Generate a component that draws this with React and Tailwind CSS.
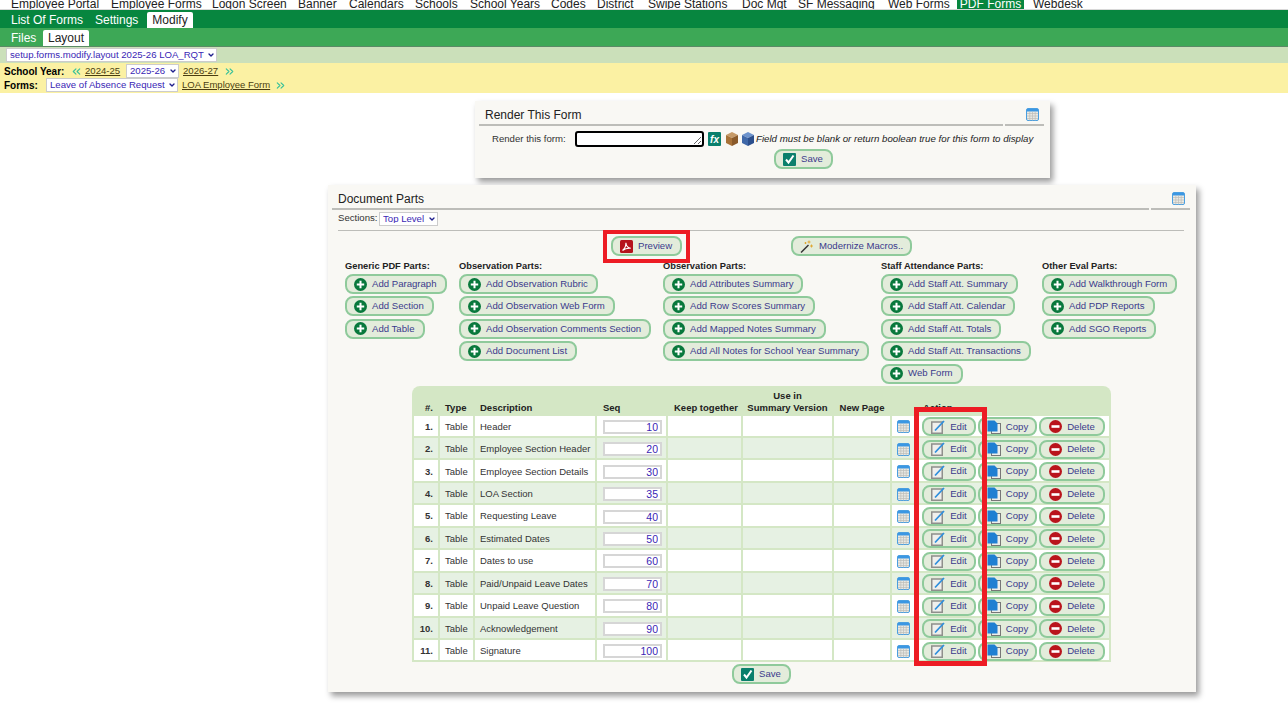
import { ChevronDown, ChevronsLeft, ChevronsRight } from 'lucide-react';

const FONT = "font-['Liberation_Sans',Arial,sans-serif]";

const topLinks = [
  ['Employee Portal', 'w-[100px]'],
  ['Employee Forms', 'w-[101px]'],
  ['Logon Screen', 'w-[86px]'],
  ['Banner', 'w-[51px]'],
  ['Calendars', 'w-[66px]'],
  ['Schools', 'w-[55px]'],
  ['School Years', 'w-[81px]'],
  ['Codes', 'w-[46px]'],
  ['District', 'w-[51px]'],
  ['Swipe Stations', 'w-[94px]'],
  ['Doc Mgt', 'w-[56px]'],
  ['SF Messaging', 'w-[90px]'],
  ['Web Forms', 'w-[69px]'],
];

const partColumns = [
  { title: 'Generic PDF Parts:', width: 'w-[114px]', items: ['Add Paragraph', 'Add Section', 'Add Table'] },
  { title: 'Observation Parts:', width: 'w-[204px]', items: ['Add Observation Rubric', 'Add Observation Web Form', 'Add Observation Comments Section', 'Add Document List'] },
  { title: 'Observation Parts:', width: 'w-[218px]', items: ['Add Attributes Summary', 'Add Row Scores Summary', 'Add Mapped Notes Summary', 'Add All Notes for School Year Summary'] },
  { title: 'Staff Attendance Parts:', width: 'w-[161px]', items: ['Add Staff Att. Summary', 'Add Staff Att. Calendar', 'Add Staff Att. Totals', 'Add Staff Att. Transactions', 'Web Form'] },
  { title: 'Other Eval Parts:', width: 'w-[140px]', items: ['Add Walkthrough Form', 'Add PDP Reports', 'Add SGO Reports'] },
];

const rows = [
  ['Header', 10],
  ['Employee Section Header', 20],
  ['Employee Section Details', 30],
  ['LOA Section', 35],
  ['Requesting Leave', 40],
  ['Estimated Dates', 50],
  ['Dates to use', 60],
  ['Paid/Unpaid Leave Dates', 70],
  ['Unpaid Leave Question', 80],
  ['Acknowledgement', 90],
  ['Signature', 100],
];

const PlusIcon = () => (
  <svg width="13" height="13" viewBox="0 0 13 13" className="shrink-0">
    <circle cx="6.500" cy="6.500" r="6.500" fill="#08783c" />
    <path d="M6.500 2.800v7.400M2.800 6.500h7.400" stroke="#fff" strokeWidth="2" />
  </svg>
);

const CalendarIcon = () => (
  <svg width="13" height="13" viewBox="0 0 13 13" className="shrink-0">
    <rect x="0.500" y="0.500" width="12" height="12" rx="1.500" fill="#e9e9e4" stroke="#4a9fe0" />
    <rect x="1" y="1" width="11" height="2.500" fill="#3b97e3" />
    <path d="M1 5.500h11M1 8h11M1 10.500h11M3.800 3.500v9M6.500 3.500v9M9.200 3.500v9" stroke="#bdbdb8" strokeWidth="0.700" />
  </svg>
);

const CheckIcon = () => (
  <svg width="13" height="13" viewBox="0 0 13 13" className="shrink-0">
    <rect width="13" height="13" rx="1" fill="#0a7f6c" />
    <path d="M3 6.500l2.500 3L10.500 2.500" fill="none" stroke="#fff" strokeWidth="2" />
  </svg>
);

const PdfIcon = () => (
  <svg width="13" height="13" viewBox="0 0 13 13" className="shrink-0">
    <rect width="13" height="13" rx="1.500" fill="#b5121b" />
    <path d="M2.500 10.500C4.500 9 6 6 5.900 2.800 6.200 6 8 8 10.800 8.300 8 8 4.800 8.800 2.500 10.500z" fill="none" stroke="#fff" strokeWidth="1.100" />
  </svg>
);

const WandIcon = () => (
  <svg width="14" height="13" viewBox="0 0 14 13" className="shrink-0">
    <path d="M1 12.500L8.500 5" stroke="#333" strokeWidth="1.500" />
    <path d="M9 0.500v3M7.500 2h3M11.500 4.500v3M10 6h3M5.500 2v2M4.500 3h2" stroke="#e0a52a" strokeWidth="0.900" />
  </svg>
);

const EditIcon = () => (
  <svg width="14" height="14" viewBox="0 0 14 14" className="shrink-0">
    <rect x="0.750" y="2" width="10.500" height="11.250" fill="#efefec" stroke="#8f8f8c" strokeWidth="1.500" />
    <path d="M4 10.500L13 1" stroke="#2f8fdc" strokeWidth="1.800" />
  </svg>
);

const CopyIcon = () => (
  <svg width="14" height="14" viewBox="0 0 14 14" className="shrink-0">
    <rect x="4.500" y="3.500" width="9" height="10" fill="#eeeeea" stroke="#777" />
    <path d="M0.500 0.500h7l3 3v8h-10z" fill="#1f7fd2" />
  </svg>
);

const DeleteIcon = () => (
  <svg width="13" height="13" viewBox="0 0 13 13" className="shrink-0">
    <circle cx="6.500" cy="6.500" r="6.500" fill="#b9141c" />
    <rect x="2.500" y="5.200" width="8" height="2.600" fill="#fff" />
  </svg>
);

const Cube = ({ top, left, right }) => (
  <svg width="12" height="14" viewBox="0 0 12 14" className="shrink-0">
    <path d="M6 0l6 3-6 3-6-3z" fill={top} />
    <path d="M0 3l6 3v8l-6-3z" fill={left} />
    <path d="M12 3L6 6v8l6-3z" fill={right} />
  </svg>
);

const Button = ({ icon, label, className = '' }) => (
  <button className={`flex items-center h-5 gap-[5px] pl-[7px] pr-[8px] rounded-[8px] border-2 border-[#8fca9b] bg-[#e3ecdb] text-[9.600px] text-[#3b3a8c] whitespace-nowrap ${className}`}>
    {icon}
    <span>{label}</span>
  </button>
);

const ActionButton = ({ icon, label, className }) => (
  <button className={`flex items-center justify-center h-[19px] gap-[5px] shrink-0 rounded-[8px] border-2 border-[#8fca9b] bg-[#e3ecdb] text-[9.600px] text-[#3b3a8c] ${className}`}>
    {icon}
    <span>{label}</span>
  </button>
);

const Select = ({ label, className }) => (
  <span className={`relative block h-[14px] shrink-0 ${className}`}>
    <select defaultValue={label} className="block w-full h-full appearance-none bg-white border border-[#ccc] pl-[3px] text-[9.600px] leading-none text-[#3a1fb5]">
      <option value={label}>{label}</option>
    </select>
    <ChevronDown size={8} strokeWidth={4} color="#1f1f8c" className="absolute right-[2px] top-[3px] pointer-events-none" />
  </span>
);

const PanelHeader = ({ title }) => (
  <div className="flex gap-[2px]">
    <div className="flex-1 h-[25px] border-b-2 border-[#bdbdb9] pl-[6px] flex items-end pb-[3px] text-[12px] leading-[12px] text-[#222]">{title}</div>
    <div className="w-[39px] h-[25px] border-b-2 border-[#bdbdb9] flex justify-end pr-[5px] pt-[7px]">
      <CalendarIcon />
    </div>
  </div>
);

export default function App() {
  return (
    <div className={`${FONT} min-h-[709px] bg-white text-black`}>
      {/* clipped main nav */}
      <div className="h-[10px] overflow-hidden flex pl-[11px] items-end text-[12px] text-[#222] border-b border-[#d8d8d8]">
        {topLinks.map(([name, width]) => (
          <span key={name} className={`${width} shrink-0 whitespace-nowrap leading-[16px] -mb-[3px]`}>{name}</span>
        ))}
        <span className="w-[67px] shrink-0 mr-[9px] text-center bg-[#07863f] text-white leading-[16px] -mb-[3px]">PDF Forms</span>
        <span className="leading-[16px] -mb-[3px]">Webdesk</span>
      </div>

      <div className="h-[18px] bg-[#07863f] flex items-end pl-[11px] text-[12px] leading-[16px] text-white">
        <span className="w-[84px]">List Of Forms</span>
        <span className="w-[52px]">Settings</span>
        <span className="w-[46px] h-4 bg-white text-[#222] text-center rounded-t-[2px]">Modify</span>
      </div>
      <div className="h-[19px] bg-[#3da856] border-b border-[#5b8a66] flex items-end pl-[11px] text-[12px] leading-[16px] text-white">
        <span className="w-[32px]">Files</span>
        <span className="w-[46px] h-4 bg-white text-[#222] text-center rounded-t-[2px]">Layout</span>
      </div>
      <div className="h-[16px] bg-[#cbe0ba] flex items-center pl-[6px]">
        <Select label="setup.forms.modify.layout 2025-26 LOA_RQT" className="w-[211px]" />
      </div>
      <div className="h-[30px] bg-[#fbf1a3] text-[9.600px] pl-[4px] pt-px">
        <div className="flex items-center h-[14px]">
          <b className="w-[66px] text-[10px]">School Year:</b>
          <ChevronsLeft size={13} color="#35c09a" className="mr-[1px]" />
          <a className="text-[#4a3d10] underline ml-[1px] w-[41px]">2024-25</a>
          <Select label="2025-26" className="w-[53px]" />
          <a className="text-[#4a3d10] underline ml-[4px]">2026-27</a>
          <ChevronsRight size={13} color="#35c09a" className="ml-[5px]" />
        </div>
        <div className="flex items-center h-[14px]">
          <b className="w-[42px] text-[10px]">Forms:</b>
          <Select label="Leave of Absence Request" className="w-[132px]" />
          <a className="text-[#4a3d10] underline ml-[4px] text-[9.500px]">LOA Employee Form</a>
          <ChevronsRight size={13} color="#35c09a" className="ml-[4px]" />
        </div>
      </div>

      {/* Render This Form */}
      <div className="ml-[475px] mt-[8px] w-[575px] h-[77px] bg-[#f9f8f4] shadow-[3px_4px_6px_rgba(0,0,0,0.4)] pl-[4px] pr-[6px]">
        <PanelHeader title="Render This Form" />
        <div className="flex items-center h-[20px] mt-[3px] text-[9.600px]">
          <span className="ml-[13px] w-[83px] text-[#333]">Render this form:</span>
          <textarea readOnly className="w-[129px] h-[16px] border-2 border-black rounded-[3px] bg-white" />
          <svg width="13" height="14" viewBox="0 0 13 14" className="ml-[4px] shrink-0">
            <rect width="13" height="14" rx="1" fill="#0a7f6c" />
            <text x="6.500" y="10.500" textAnchor="middle" fontSize="10" fontWeight="bold" fontStyle="italic" fill="#fff">fx</text>
          </svg>
          <span className="ml-[5px]"><Cube top="#c69a68" left="#a87238" right="#8a5a2a" /></span>
          <span className="ml-[4px]"><Cube top="#6d93cc" left="#3f68a8" right="#2c4f8c" /></span>
          <i className="ml-[2px] text-[#222] text-[9.700px] whitespace-nowrap">Field must be blank or return boolean true for this form to display</i>
        </div>
        <div className="flex">
          <Button icon={<CheckIcon />} label="Save" className="ml-[295px] w-[59px]" />
        </div>
      </div>

      {/* Document Parts */}
      <div className="relative ml-[328px] mt-[7px] w-[868px] h-[507px] bg-[#f9f8f4] shadow-[3px_4px_6px_rgba(0,0,0,0.4)] pl-[4px] pr-[6px]">
        <PanelHeader title="Document Parts" />
        <div className="flex items-center h-[21px] mx-[6px] border-b border-[#bdbdb9] text-[9.600px] text-[#333] pb-[3px]">
          <span className="w-[41px]">Sections:</span>
          <Select label="Top Level" className="w-[59px]" />
        </div>

        <div className="flex mt-[5px] ml-[279px]">
          <Button icon={<PdfIcon />} label="Preview" className="w-[71px]" />
          <Button icon={<WandIcon />} label="Modernize Macros.." className="w-[121px] ml-[109px] gap-[3px]" />
        </div>

        <div className="flex mt-[3px] pl-[13px]">
          {partColumns.map((col) => (
            <div key={col.title + col.width} className={`${col.width} shrink-0`}>
              <div className="h-[15px] text-[9.300px] font-bold text-[#222] leading-[14px]">{col.title}</div>
              <div className="flex flex-col items-start gap-[2.400px]">
                {col.items.map((item) => (
                  <Button key={item} icon={<PlusIcon />} label={item} />
                ))}
              </div>
            </div>
          ))}
        </div>

        <div className="ml-[80px] mt-[2px] w-[699px] bg-[#d4e7c5] rounded-t-[8px] overflow-hidden">
          <table className="table-fixed w-[699px] border-separate border-spacing-[2px] text-[9.500px] text-[#333]">
            <colgroup>
              <col className="w-[24px]" />
              <col className="w-[33px]" />
              <col className="w-[120px]" />
              <col className="w-[69px]" />
              <col className="w-[73px]" />
              <col className="w-[89px]" />
              <col className="w-[56px]" />
              <col className="w-[217px]" />
            </colgroup>
            <thead>
              <tr className="h-[26px] text-[#222] align-bottom leading-[12px]">
                <th className="font-bold text-right pr-[5px]">#.</th>
                <th className="font-bold text-left pl-[5px]">Type</th>
                <th className="font-bold text-left pl-[5px]">Description</th>
                <th className="font-bold text-left pl-[6px]">Seq</th>
                <th className="font-bold text-left pl-[6px] whitespace-nowrap">Keep together</th>
                <th className="font-bold text-center whitespace-nowrap">Use in<br />Summary Version</th>
                <th className="font-bold text-center whitespace-nowrap">New Page</th>
                <th className="font-bold text-left pl-[31px]">Action</th>
              </tr>
            </thead>
            <tbody>
              {rows.map(([name, seq], i) => (
                <tr key={name} className={`h-[20.450px] ${i % 2 === 0 ? 'bg-white' : 'bg-[#e6f1e3]'}`}>
                  <td className="font-bold text-right pr-[5px] pt-[2px]">{i + 1}.</td>
                  <td className="pl-[5px] pt-[2px]">Table</td>
                  <td className="pl-[5px] pt-[2px] whitespace-nowrap">{name}</td>
                  <td className="pl-[6px] pt-[2px]">
                    <input readOnly value={seq} className="block w-[59px] h-[14px] bg-white border-2 border-[#d6d6d6] text-right pr-[2px] text-[10.500px] leading-[10px] text-[#3a1fb5]" />
                  </td>
                  <td />
                  <td />
                  <td />
                  <td className="pt-[2px]">
                    <div className="flex items-center h-[18px] pl-[5px]">
                      <CalendarIcon />
                      <ActionButton icon={<EditIcon />} label="Edit" className="w-[54px] ml-[12px]" />
                      <ActionButton icon={<CopyIcon />} label="Copy" className="w-[59px] ml-[2px]" />
                      <ActionButton icon={<DeleteIcon />} label="Delete" className="w-[66px] ml-[2px]" />
                    </div>
                  </td>
                </tr>
              ))}
            </tbody>
          </table>
        </div>

        <div className="flex mt-[2px] ml-[400px]">
          <Button icon={<CheckIcon />} label="Save" className="w-[59px]" />
        </div>

        {/* annotation boxes drawn over the page */}
        <div className="absolute left-[275px] top-[45px] w-[87px] h-[33px] border-[4px] border-[#ed1c24]" />
        <div className="absolute left-[586px] top-[222px] w-[73px] h-[259px] border-[5px] border-[#ed1c24]" />
      </div>
    </div>
  );
}
